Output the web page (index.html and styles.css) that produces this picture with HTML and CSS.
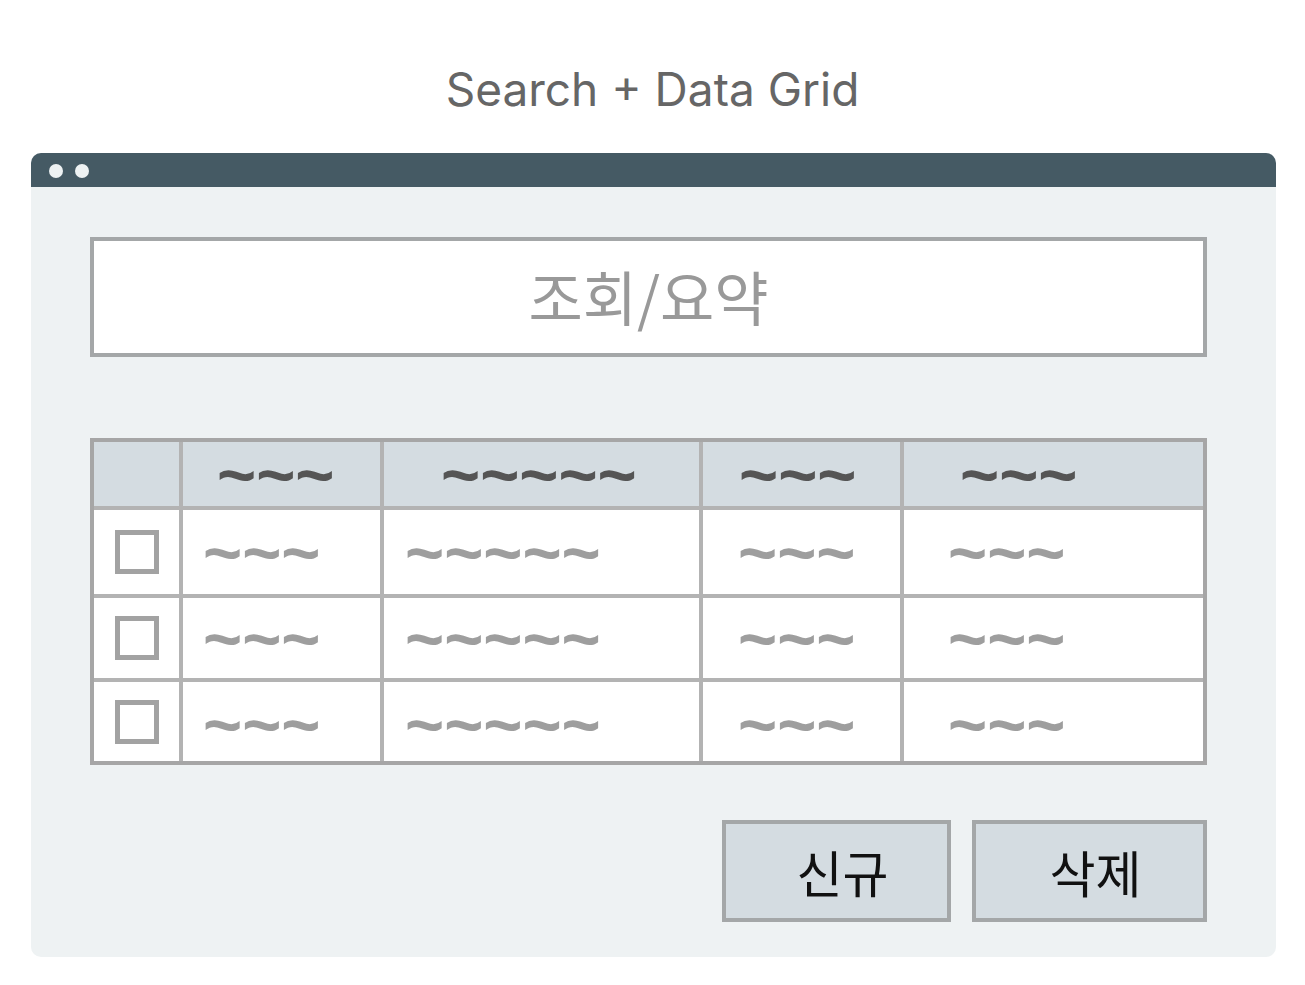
FILE: index.html
```html
<!DOCTYPE html>
<html>
<head>
    <meta charset="UTF-8">
    <meta name="viewport" content="width=device-width, initial-scale=1.0">
    <title>Search + Data Grid</title>
    <link rel="stylesheet" href="styles.css">
</head>
<body>
    <h1 class="page-title">Search + Data Grid</h1>

    <div class="window">
        <div class="window-bar">
            <span class="dot"></span>
            <span class="dot"></span>
        </div>

        <div class="window-body">
            <div class="search-box">조회/요약</div>

            <div class="grid">
                <div class="cell head"></div>
                <div class="cell head h1">~~~</div>
                <div class="cell head h2">~~~~~</div>
                <div class="cell head h3">~~~</div>
                <div class="cell head h4">~~~</div>

                <div class="cell check"><span class="checkbox"></span></div>
                <div class="cell b1">~~~</div>
                <div class="cell b2">~~~~~</div>
                <div class="cell b3">~~~</div>
                <div class="cell b4">~~~</div>

                <div class="cell check"><span class="checkbox"></span></div>
                <div class="cell b1">~~~</div>
                <div class="cell b2">~~~~~</div>
                <div class="cell b3">~~~</div>
                <div class="cell b4">~~~</div>

                <div class="cell check last"><span class="checkbox"></span></div>
                <div class="cell b1 last">~~~</div>
                <div class="cell b2 last">~~~~~</div>
                <div class="cell b3 last">~~~</div>
                <div class="cell b4 last">~~~</div>
            </div>

            <div class="actions">
                <button class="btn btn-new">신규</button>
                <button class="btn btn-delete">삭제</button>
            </div>
        </div>
    </div>
</body>
</html>
```

FILE: styles.css
```css
body {
    margin: 0;
    background-color: #ffffff;
    font-family: 'Noto Sans CJK KR', 'Noto Sans', sans-serif;
}

.page-title {
    margin: 0;
    height: 153px;
    box-sizing: border-box;
    padding-top: 60px;
    text-align: center;
    font-family: 'Inter', sans-serif;
    font-weight: 400;
    font-size: 46px;
    line-height: 58px;
    color: #666666;
}

.window {
    margin-left: 31px;
    width: 1245px;
    height: 804px;
    background-color: #eef2f3;
    border-radius: 10px;
    overflow: hidden;
}

.window-bar {
    height: 34px;
    background-color: #455a64;
    display: flex;
    align-items: center;
    gap: 12px;
    padding-left: 18px;
}

.dot {
    width: 14px;
    height: 14px;
    border-radius: 50%;
    background-color: #eef2f3;
    margin-top: 2px;
}

.window-body {
    padding: 50px 69px 0 59px;
}

.search-box {
    height: 120px;
    box-sizing: border-box;
    border: 4px solid #a4a7a8;
    background-color: #ffffff;
    display: flex;
    align-items: center;
    justify-content: center;
    font-size: 59px;
    color: #999999;
    padding-bottom: 4px;
}

.grid {
    margin-top: 81px;
    display: grid;
    grid-template-columns: 85px 197px 315px 197px 299px;
    grid-template-rows: 64px 84px 80px 79px;
    gap: 4px;
    border: 4px solid #a6a6a6;
    background-color: #b3b3b3;
}

.cell {
    background-color: #ffffff;
    display: flex;
    align-items: center;
    font-family: 'Liberation Sans', sans-serif;
    font-weight: bold;
    font-size: 67px;
    line-height: 1;
    color: #9e9e9e;
    white-space: nowrap;
}

.head {
    background-color: #d4dce1;
    color: #555555;
}

.last {
    padding-top: 6px;
}

.h1 { padding-left: 34px; }
.h2 { padding-left: 57px; }
.h3 { padding-left: 36px; }
.h4 { padding-left: 56px; }

.b1 { padding-left: 20px; }
.b2 { padding-left: 21px; }
.b3 { padding-left: 35px; }
.b4 { padding-left: 44px; }

.check {
    justify-content: center;
}

.check.last {
    padding-top: 0;
}

.checkbox {
    width: 44px;
    height: 44px;
    box-sizing: border-box;
    border: 5px solid #a2a2a2;
    background-color: #ffffff;
}

.actions {
    margin-top: 55px;
    display: flex;
    justify-content: flex-end;
    gap: 21px;
}

.btn {
    height: 102px;
    box-sizing: border-box;
    border: 4px solid #a4a7a8;
    background-color: #d4dce1;
    font-family: 'Noto Sans CJK KR', sans-serif;
    font-size: 50px;
    color: #111111;
    padding: 0 0 0 12px;
    cursor: pointer;
}

.btn-new { width: 229px; }
.btn-delete { width: 235px; }
```
